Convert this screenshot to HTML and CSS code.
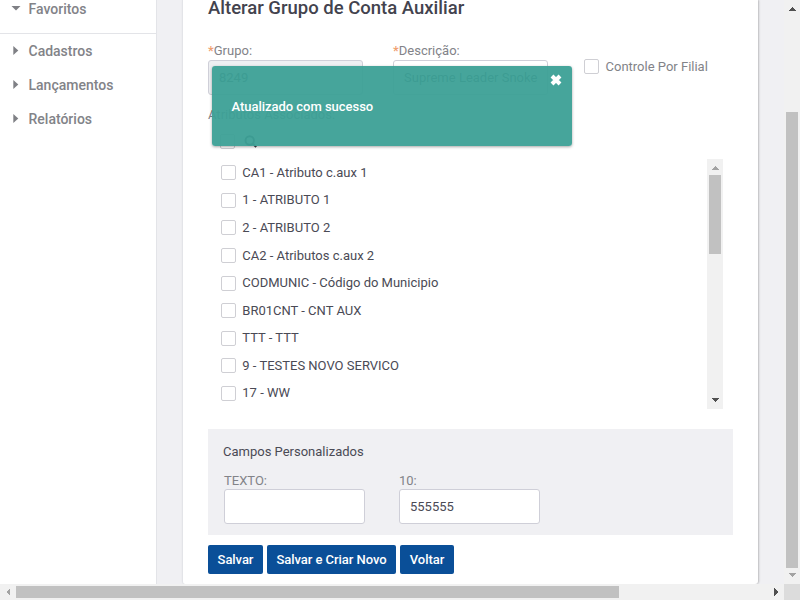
FILE: index.html
```html
<!DOCTYPE html>
<html lang="pt-BR">
<head>
<meta charset="utf-8">
<title>Alterar Grupo de Conta Auxiliar</title>
<link rel="stylesheet" href="styles.css">
</head>
<body>
<div class="window">
  <div class="page">
    <nav class="sidebar">
      <div class="nav-item nav-fav"><svg class="caret" width="10" height="10"><path d="M0.500 2h9L5 6.500z"/></svg>Favoritos</div>
      <div class="nav-item"><svg class="caret" width="10" height="10"><path d="M2.300 0v9L7.300 4.500z"/></svg>Cadastros</div>
      <div class="nav-item"><svg class="caret" width="10" height="10"><path d="M2.300 0v9L7.300 4.500z"/></svg>Lançamentos</div>
      <div class="nav-item"><svg class="caret" width="10" height="10"><path d="M2.300 0v9L7.300 4.500z"/></svg>Relatórios</div>
    </nav>
    <main class="card">
      <h1>Alterar Grupo de Conta Auxiliar</h1>
      <div class="fields">
        <div class="field group"><label><b>*</b>Grupo:</label><div class="input disabled">8249</div></div>
        <div class="field desc"><label><b>*</b>Descrição:</label><div class="input">Supreme Leader Snoke</div></div>
        <div class="branch"><i class="box"></i>Controle Por Filial</div>
      </div>
      <div class="assoc">Atributos Associados:</div>
      <div class="filter"><i class="box"></i><svg class="search" width="14" height="14" viewBox="0 0 14 14"><circle cx="5.700" cy="5.500" r="4.200"/><path d="M9 8.800l3.200 3.200"/></svg></div>
      <div class="list">
        <div class="items">
          <div class="item"><i class="box"></i>CA1 - Atributo c.aux 1</div>
          <div class="item"><i class="box"></i>1 - ATRIBUTO 1</div>
          <div class="item"><i class="box"></i>2 - ATRIBUTO 2</div>
          <div class="item"><i class="box"></i>CA2 - Atributos c.aux 2</div>
          <div class="item"><i class="box"></i>CODMUNIC - Código do Municipio</div>
          <div class="item"><i class="box"></i>BR01CNT - CNT AUX</div>
          <div class="item"><i class="box"></i>TTT - TTT</div>
          <div class="item"><i class="box"></i>9 - TESTES NOVO SERVICO</div>
          <div class="item"><i class="box"></i>17 - WW</div>
        </div>
        <div class="bar-v list-bar">
          <svg class="off" width="16" height="16" shape-rendering="crispEdges"><path d="M4 11l4-4 4 4z"/></svg>
          <div class="thumb"></div>
          <svg width="16" height="16" shape-rendering="crispEdges"><path d="M4 5h8l-4 4z"/></svg>
        </div>
      </div>
      <section class="custom">
        <h2>Campos Personalizados</h2>
        <div class="custom-fields">
          <div class="field"><label>TEXTO:</label><div class="input"></div></div>
          <div class="field"><label>10:</label><div class="input">555555</div></div>
        </div>
      </section>
      <div class="buttons"><button class="save">Salvar</button><button class="save-new">Salvar e Criar Novo</button><button class="back">Voltar</button></div>
    </main>
  </div>
  <div class="bar-v page-bar">
    <svg width="16" height="16" shape-rendering="crispEdges"><path d="M4 11l4-4 4 4z"/></svg>
    <div class="thumb"></div>
    <svg class="off" width="16" height="16" shape-rendering="crispEdges"><path d="M4 5h8l-4 4z"/></svg>
  </div>
  <div class="bar-h">
    <svg class="off" width="16" height="16" shape-rendering="crispEdges"><path d="M10 4v8l-4-4z"/></svg>
    <div class="thumb"></div>
    <svg width="16" height="16" shape-rendering="crispEdges"><path d="M6 4v8l4-4z"/></svg>
  </div>
  <div class="corner"></div>
  <div class="toast">Atualizado com sucesso<svg class="close" width="12" height="12" viewBox="0 0 12 12"><path d="M2 2l8 8M10 2l-8 8"/></svg></div>
</div>
</body>
</html>
```
FILE: styles.css
```css
* { box-sizing: border-box; }
body { margin: 0; overflow: hidden; font: 13px/16px Roboto, sans-serif; color: #4a4a55; }
svg { display: block; flex: none; fill: #505050; }
.window { position: relative; width: 800px; height: 600px; display: grid; grid-template: 584px 16px / 784px 16px; }
.page { display: flex; background: #f0f0f3; overflow: hidden; }
.sidebar { width: 157px; flex: none; background: #fff; border-right: 1px solid #e3e4e8; }
.nav-item { display: flex; align-items: center; height: 34px; padding-left: 11px; gap: 7.5px; font-size: 14px; font-weight: 500; color: #828388; }
.nav-fav { padding-bottom: 15px; border-bottom: 1px solid #e3e4e8; }
.caret { fill: #7f8085; }
.card { width: 576px; flex: none; margin-left: 25px; padding: 0 25px; height: 584px; background: #fff; border-left: 1px solid #e3e4e8; border-radius: 0 0 3px 3px; box-shadow: 1px 0 2px rgba(0,0,0,.22); }
h1 { margin: 0; height: 43px; font-size: 18.5px; line-height: 16px; font-weight: 500; white-space: nowrap; color: #43434e; }
.fields { display: flex; height: 64px; }
.field label { display: block; color: #828388; }
.field label b { color: #f0a070; font-weight: 500; }
.group, .desc { width: 185px; }
.group .input, .desc .input { width: 155px; margin-top: 1px; }
.desc { width: 191px; }
.input { height: 35px; border: 1px solid #cfcfd8; border-radius: 3px; background: #fff; padding: 9px 10px; white-space: nowrap; }
.input.disabled { background: #eeeff2; }
.box { flex: none; width: 15px; height: 15px; border: 1px solid #cfcfd4; border-radius: 2px; background: #fff; }
.branch { display: flex; align-items: center; height: 16px; margin-top: 16px; gap: 6.500px; color: #828388; }
.branch .box { margin-bottom: 1px; }
.assoc { height: 27px; color: #828388; }
.filter { display: flex; height: 25px; padding-left: 12px; gap: 9px; }
.search { margin-top: 1px; fill: none; stroke: #3f3f4a; stroke-width: 2; }
.list { display: flex; justify-content: space-between; height: 250px; width: 515px; }
.items { padding-left: 13px; }
.item { display: flex; align-items: center; gap: 6.300px; height: 27.580px; }
.bar-v { display: flex; flex-direction: column; width: 16px; background: #f1f1f1; }
.thumb { background: #c1c1c1; }
.off { fill: #a3a3a3; }
.list-bar .thumb { margin: 0 2px 139px; height: 79px; }
.page-bar .thumb { margin: 96px 2px 0; height: 456px; }
.bar-h { display: flex; align-items: center; background: #f1f1f1; }
.bar-h .thumb { width: 603px; height: 12px; margin-right: 149px; }
.corner { background: #dcdcdc; }
.custom { width: 525px; height: 106px; margin-top: 20px; padding: 15px; background: #f0f0f3; }
h2 { margin: 0; font-size: 13px; line-height: 16px; font-weight: 400; }
.custom-fields { display: flex; gap: 34px; margin: 13px 0 0 1px; }
.custom-fields .input { width: 141px; }
.buttons { display: flex; gap: 4px; margin-top: 10px; }
button { height: 29px; padding: 0; border: 0; border-radius: 2px; background: #0a4f98; color: #fff; font: 500 13px/16px Roboto, sans-serif; letter-spacing: -.05px; }
.save { width: 55px; }
.save-new { width: 129px; }
.back { width: 54px; }
.toast { position: absolute; left: 212px; top: 66px; width: 360px; height: 80px; padding: 33px 19.500px; border-radius: 3px; background: rgba(60,160,150,.95); color: #fff; font-weight: 500; letter-spacing: -.03px; box-shadow: 0 1px 3px rgba(0,0,0,.35); }
.close { position: absolute; right: 10px; top: 8px; stroke: #fff; stroke-width: 4; }
```
